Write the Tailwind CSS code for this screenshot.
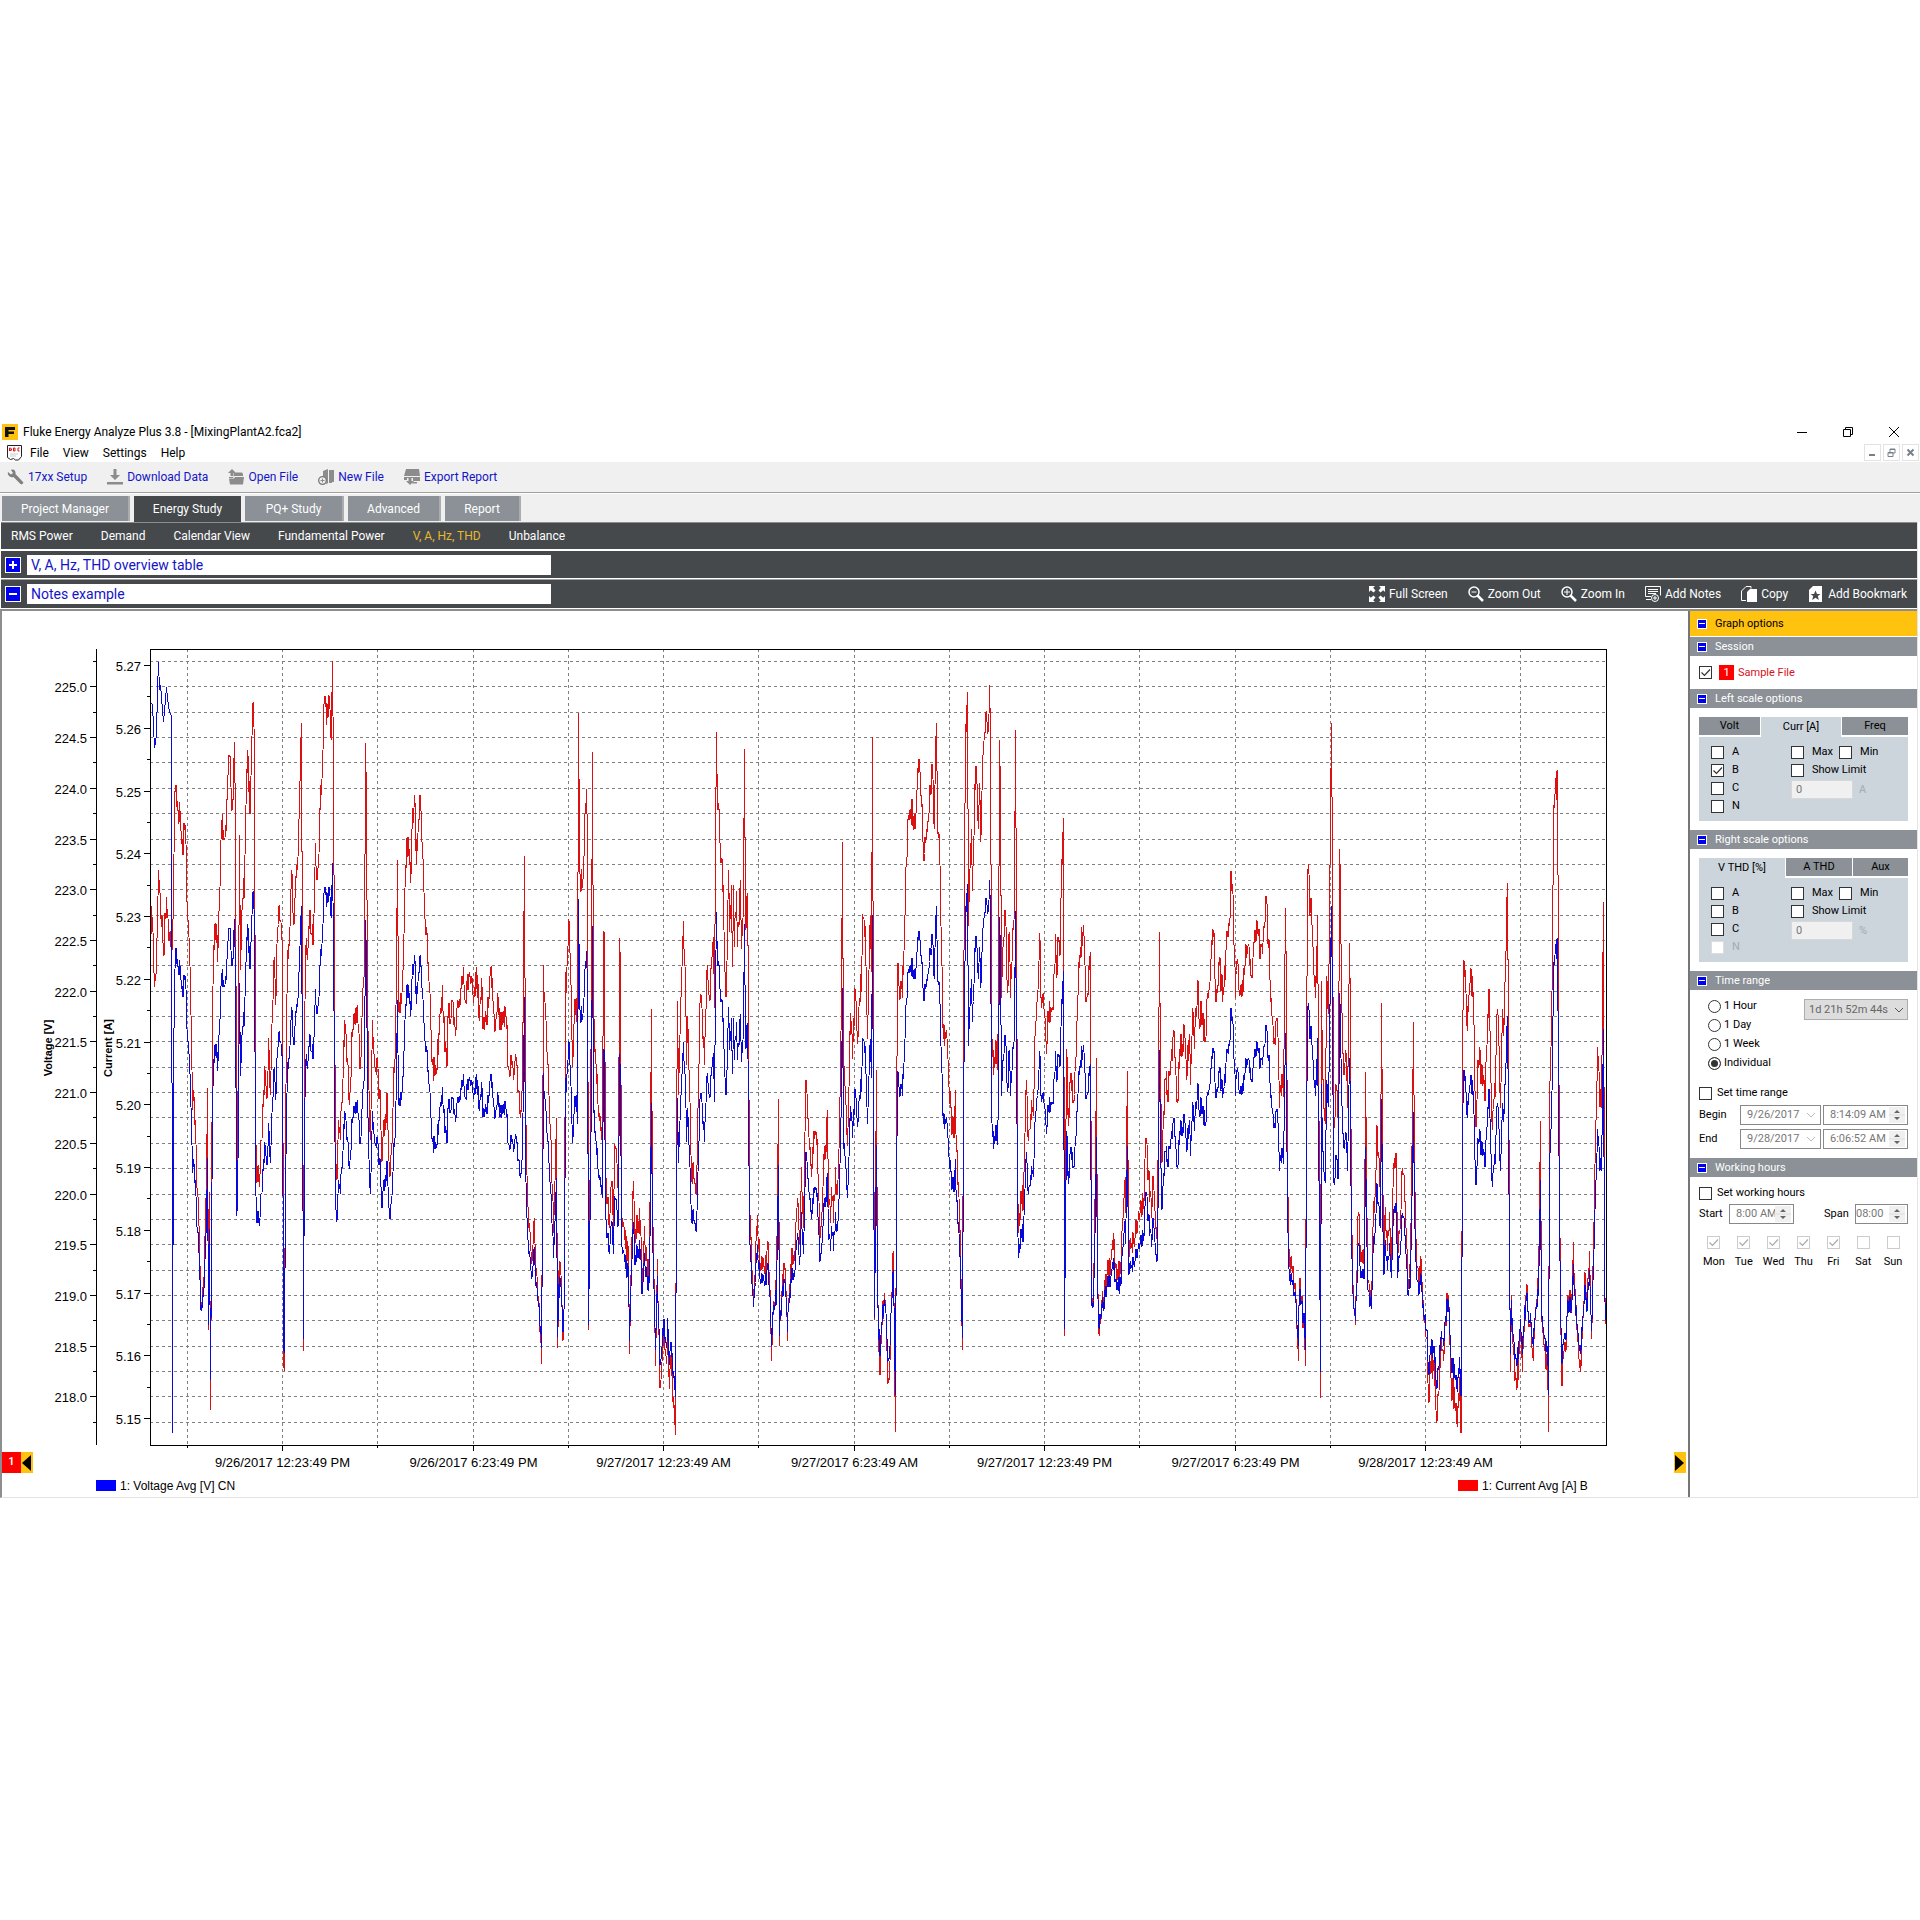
<!DOCTYPE html>
<html lang="en">
<head>
  <meta charset="UTF-8">
  <meta name="viewport" content="width=device-width, initial-scale=1.0">
  <title>Fluke Energy Analyze Plus 3.8 - [MixingPlantA2.fca2]</title>
  <script src="https://cdn.jsdelivr.net/npm/@tailwindcss/browser@4"></script>
</head>
<body class="bg-white min-h-screen pt-[421px] text-xs text-black font-[Roboto,sans-serif]">

  <!-- Title bar -->
  <header class="flex items-center h-[22px] pl-0.5 pr-5">
    <svg class="w-4 h-4 mr-[5px]" viewBox="0 0 16 16"><rect width="16" height="16" fill="#ffc20e"/><path d="M3 3h10v3H6.500v1.500H12v2.500H6.500V13H3z" fill="#111"/></svg>
    <h1>Fluke Energy Analyze Plus 3.8 - [MixingPlantA2.fca2]</h1>
    <div class="ml-auto flex items-center gap-[34px]">
      <button aria-label="Minimize"><svg class="w-3 h-3" viewBox="0 0 12 12" stroke="#000"><path d="M1 6.500h10"/></svg></button>
      <button aria-label="Restore"><svg class="w-3 h-3" viewBox="0 0 12 12" fill="none" stroke="#000"><path d="M1.500 3.500h7v7h-7zM3.500 3.500v-2h7v7h-2"/></svg></button>
      <button aria-label="Close"><svg class="w-3 h-3" viewBox="0 0 12 12" stroke="#000"><path d="M1 1l10 10M11 1L1 11"/></svg></button>
    </div>
  </header>

  <!-- Menu bar -->
  <div class="flex items-center h-[19px] pl-[7px] pr-px">
    <svg class="w-4 h-4 mr-[7px]" viewBox="0 0 16 16" fill="none" stroke="#222"><path d="M.5.500h14v11l-3 3.500h-3l-2-1.500-3 1-3-2z" fill="#fff"/><path d="M2.500 3v3M2.500 3h1l1 1v1l-1 1zM6.500 3h1.500v3H6.500zM12.500 3H11v3h1.500" stroke="#d11"/><path d="M3 9h8M3 11h6" stroke="#ccc"/></svg>
    <nav class="flex gap-[14px]">
      <button>File</button><button>View</button><button>Settings</button><button>Help</button>
    </nav>
    <div class="ml-auto flex gap-0.5">
      <button aria-label="Minimize document" class="w-[17px] h-[17px] border border-[#e3e3e3] grid place-items-center"><svg class="w-[9px] h-[9px]" viewBox="0 0 9 9"><path d="M1 6h6v2H1z" fill="#77818c"/></svg></button>
      <button aria-label="Restore document" class="w-[17px] h-[17px] border border-[#e3e3e3] grid place-items-center"><svg class="w-[9px] h-[9px]" viewBox="0 0 9 9" fill="none" stroke="#77818c"><path d="M1 4.500h5v4H1zM3 4V1h5v4H6M1 5h5M3 1.500h5"/></svg></button>
      <button aria-label="Close document" class="w-[17px] h-[17px] border border-[#e3e3e3] grid place-items-center"><svg class="w-[9px] h-[9px]" viewBox="0 0 9 9" stroke="#77818c" stroke-width="2"><path d="M1.500 1.500l6 6M7.500 1.500l-6 6"/></svg></button>
    </div>
  </div>

  <!-- Toolbar -->
  <div class="flex items-center gap-5 h-[31px] pl-[7px] bg-[#f0f0f0] border-b border-[#a0a0a0] text-[#1414c8]">
    <button class="flex items-center gap-1"><svg class="w-[17px] h-4" viewBox="0 0 17 16" fill="#808080"><path d="M1 3l3 2.500L6 4 4 1C7-.5 9 2 8.500 5L16 13c1 1-1 3-2.500 2L6.500 8C3 9 0 6 1 3z"/></svg>17xx Setup</button>
    <button class="flex items-center gap-1"><svg class="w-4 h-4" viewBox="0 0 16 16" fill="#8c8c8c"><path d="M6.500 0h3v6H13l-5 5-5-5h3.500zM0 13h16v2.500H0z"/></svg>Download Data</button>
    <button class="flex items-center gap-1"><svg class="w-4 h-4" viewBox="0 0 16 16" fill="#8c8c8c"><path d="M4 0l4 4H5.500v3h-3V4H0zM1 8h5V3.500h8L15 5v2H6L5 9H1zM1 9.500L2 15.500h13L16 8H7L6 9.500z"/></svg>Open File</button>
    <button class="flex items-center gap-1"><svg class="w-4 h-4" viewBox="0 0 16 16" fill="#8c8c8c"><path d="M5 2l5-2v14l-2 1.500C9 12 8 8 5 7.500zM11 1l5 0v12h-2v1h-3z"/><circle cx="4.500" cy="11.500" r="3.800" fill="#f0f0f0" stroke="#777" stroke-width="1.300"/><path d="M4 9.500h1V11h1.500v1H5v1.500H4V12H2.500v-1H4z"/></svg>New File</button>
    <button class="flex items-center gap-1"><svg class="w-4 h-4" viewBox="0 0 16 16" fill="#8c8c8c"><path d="M2 0h13l1 7H0zM0 8h16v4H9V9H3v2H0zM4.500 8h3v4H10l-4 4-4-4h2.500zM9 13h4v1.500H8z"/></svg>Export Report</button>
  </div>

  <!-- Study tabs -->
  <nav class="flex items-end gap-1 h-[29px] pl-0.5 bg-[#f0f0f0] border-t border-white text-white">
    <button class="w-32 h-[25px] mb-px bg-[#8b9196] border-r-2 border-[#a9adb0]">Project Manager</button>
    <button class="w-[107px] h-[26px] bg-[#45494c]">Energy Study</button>
    <button class="w-[99px] h-[25px] mb-px bg-[#8b9196] border-r-2 border-[#a9adb0]">PQ+ Study</button>
    <button class="w-[93px] h-[25px] mb-px bg-[#8b9196] border-r-2 border-[#a9adb0]">Advanced</button>
    <button class="w-[76px] h-[25px] mb-px bg-[#8b9196] border-r-2 border-[#a9adb0]">Report</button>
  </nav>

  <main class="mr-[2px] border-r border-[#e3e3e3]">
    <nav class="flex items-center gap-7 h-[27px] pl-[10px] ml-px bg-[#45494c] border-t border-[#8d8d8d] text-white">
      <a href="#rms">RMS Power</a>
      <a href="#demand">Demand</a>
      <a href="#calendar">Calendar View</a>
      <a href="#fundamental">Fundamental Power</a>
      <a href="#vahz" class="text-[#e8b82e]">V, A, Hz, THD</a>
      <a href="#unbalance">Unbalance</a>
    </nav>

    <div class="flex items-center gap-1.5 h-[27px] mt-0.5 pl-1 ml-px bg-[#45494c]">
      <button aria-label="Expand table" class="w-4 h-4 bg-[#0000f0] border border-white grid place-items-center"><svg class="w-2.5 h-2.5" viewBox="0 0 10 10" stroke="#fff" stroke-width="2"><path d="M1 5h8M5 1v8"/></svg></button>
      <input aria-label="Table title" value="V, A, Hz, THD overview table" class="w-[524px] h-5 px-1 bg-white text-sm text-[#1414c8]">
    </div>

    <div class="flex items-center gap-1.5 h-[29px] mt-px pl-1 pr-[10px] ml-px bg-[#45494c] border-t border-[#a0a0a0] text-white">
      <button aria-label="Collapse chart" class="w-4 h-4 bg-[#0000f0] border border-white grid place-items-center"><svg class="w-2.5 h-2.5" viewBox="0 0 10 10" stroke="#fff" stroke-width="2"><path d="M1 5h8"/></svg></button>
      <input aria-label="Chart title" value="Notes example" class="w-[524px] h-5 px-1 bg-white text-sm text-[#1414c8]">
      <div class="ml-auto flex items-center gap-5">
        <button class="flex items-center gap-1"><svg class="w-4 h-4" viewBox="0 0 16 16" fill="#fff"><path d="M0 0h6L4.200 1.800 6.500 4.500 4.500 6.500 1.800 4.200 0 6zM16 0v6l-1.800-1.800L11.500 6.500 9.500 4.500l2.300-2.700L10 0zM0 16v-6l1.800 1.800 2.700-2.300 2 2-2.300 2.700L6 16zM16 16h-6l1.800-1.800-2.300-2.700 2-2 2.700 2.300L16 10z"/></svg>Full Screen</button>
        <button class="flex items-center gap-1"><svg class="w-4 h-4" viewBox="0 0 16 16" fill="none" stroke="#fff"><circle cx="6" cy="6" r="5" stroke-width="1.500"/><path d="M3.500 6h5"/><path d="M9.500 9.500l5.500 5.500" stroke-width="2.500"/></svg>Zoom Out</button>
        <button class="flex items-center gap-1"><svg class="w-4 h-4" viewBox="0 0 16 16" fill="none" stroke="#fff"><circle cx="6" cy="6" r="5" stroke-width="1.500"/><path d="M3 6h6M6 3v6"/><path d="M9.500 9.500l5.500 5.500" stroke-width="2.500"/></svg>Zoom In</button>
        <button class="flex items-center gap-1"><svg class="w-4 h-4" viewBox="0 0 16 16" fill="none" stroke="#fff"><path d="M6 10.500H.5V.500h15v9M3 3.500h10M3 5.500h10M3 7.500h8M1 13.500h5"/><circle cx="10" cy="12" r="3.500" fill="#45494c"/><path d="M8 12h4M10 10v4"/></svg>Add Notes</button>
        <button class="flex items-center gap-1"><svg class="w-4 h-4" viewBox="0 0 16 16"><path d="M5 14.500H.5V5L5 .500h5v2" fill="none" stroke="#fff"/><path d="M9 3h7v13H6V6z" fill="#fff"/></svg>Copy</button>
        <button class="flex items-center gap-1"><svg class="w-4 h-4" viewBox="0 0 16 16"><path d="M5 0h9v16H1V4z" fill="#fff"/><path d="M7.500 4.500L9 8h3.500L9.800 10l1 4-3.300-2.300L4.200 14l1-4L2.500 8H6z" fill="#45494c"/></svg>Add Bookmark</button>
      </div>
    </div>

    <div class="flex mt-px border-t-2 border-l-2 border-[#8d8d8d] border-b border-b-[#e3e3e3]">
      <!-- Chart -->
      <section class="relative flex-1 min-w-0">
        <svg id="chart" class="block w-full h-auto font-['Liberation_Sans',sans-serif] text-[13px]" viewBox="2 611 1686 886" role="img" aria-label="Voltage and current over time">
          <g id="grid" stroke="#808080" stroke-dasharray="3 3" shape-rendering="crispEdges"></g>
          <path id="current" fill="none" stroke="#dc1010" stroke-linejoin="bevel" shape-rendering="crispEdges"/>
          <path id="voltage" fill="none" stroke="#0808d8" stroke-linejoin="bevel" shape-rendering="crispEdges"/>
          <rect x="150.500" y="649.500" width="1456" height="796" fill="none" stroke="#000"/>
          <path id="ticks" stroke="#000" fill="none" shape-rendering="crispEdges"/>
          <g id="labels"></g>
          <g class="text-[11px] font-bold" text-anchor="middle">
            <text transform="translate(52 1048) rotate(-90)">Voltage [V]</text>
            <text transform="translate(112 1048) rotate(-90)">Current [A]</text>
          </g>
          <rect x="96" y="1480" width="20" height="11" fill="#00f"/>
          <text x="120" y="1490" class="text-xs">1: Voltage Avg [V] CN</text>
          <rect x="1458" y="1480" width="20" height="11" fill="#f00"/>
          <text x="1482" y="1490" class="text-xs">1: Current Avg [A] B</text>
        </svg>
        <button aria-label="Previous section" class="absolute left-0 bottom-6 flex items-center h-[21px] bg-[#ffc20e]">
          <span class="w-[19px] h-full grid place-items-center bg-[#f00] text-white text-[11px] font-semibold">1</span>
          <svg class="w-3 h-5" viewBox="0 0 12 20"><path d="M10 2v16L1 10z"/></svg>
        </button>
        <button aria-label="Next section" class="absolute right-0.5 bottom-6 h-[21px] bg-[#ffc20e]">
          <svg class="w-3 h-5" viewBox="0 0 12 20"><path d="M1 2v16l9-8z"/></svg>
        </button>
      </section>

      <!-- Options -->
      <aside class="w-[229px] shrink-0 border-l-2 border-[#767676] text-[11px] leading-4">
        <h2 class="flex items-center gap-2 h-[25px] pl-[7px] bg-[#ffc20e]"><button aria-label="Collapse graph options" class="w-[10px] h-[10px] bg-[#0000f0] border border-white grid place-items-center"><span class="w-1.5 h-px bg-white"></span></button>Graph options</h2>
        <h3 class="flex items-center gap-2 h-[19px] mt-px pl-[7px] bg-[#8b9196] text-white"><button aria-label="Collapse session" class="w-[10px] h-[10px] bg-[#0000f0] border border-white grid place-items-center"><span class="w-1.5 h-px bg-white"></span></button>Session</h3>
        <label class="flex items-center h-[33px] pl-[9px] text-[#d8101c]">
          <span class="grid mr-[7px]"><input type="checkbox" checked class="peer appearance-none w-[13px] h-[13px] bg-white border border-[#333] [grid-area:1/1]"><svg class="w-[13px] h-[13px] [grid-area:1/1] invisible peer-checked:visible" viewBox="0 0 13 13" fill="none" stroke="#333"><path d="M2.500 6.500l3 3 5.500-6" stroke-width="1.200"/></svg></span>
          <span class="w-[15px] h-[15px] mr-1 grid place-items-center bg-[#f00] text-white">1</span>Sample File
        </label>

        <h3 class="flex items-center gap-2 h-[19px] pl-[7px] bg-[#8b9196] text-white"><button aria-label="Collapse left scale" class="w-[10px] h-[10px] bg-[#0000f0] border border-white grid place-items-center"><span class="w-1.5 h-px bg-white"></span></button>Left scale options</h3>
        <div class="mx-[9px] mt-[9px] mb-[9px]">
          <div class="flex h-5 bg-[#ccd4dc]">
            <button class="w-[62px] bg-[#8b9196] border-r border-b-2 border-white">Volt</button>
            <button class="flex-1">Curr [A]</button>
            <button class="w-[67px] bg-[#8b9196] border-l border-b-2 border-white">Freq</button>
          </div>
          <div class="flex h-[84px] pt-[7px] pl-3 bg-[#ccd4dc]">
            <div class="w-20 flex flex-col gap-0.5">
              <label class="flex items-center gap-2"><input type="checkbox" class="appearance-none w-[13px] h-[13px] bg-white border border-[#333]">A</label>
              <label class="flex items-center gap-2"><span class="grid"><input type="checkbox" checked class="peer appearance-none w-[13px] h-[13px] bg-white border border-[#333] [grid-area:1/1]"><svg class="w-[13px] h-[13px] [grid-area:1/1] invisible peer-checked:visible" viewBox="0 0 13 13" fill="none" stroke="#333"><path d="M2.500 6.500l3 3 5.500-6" stroke-width="1.200"/></svg></span>B</label>
              <label class="flex items-center gap-2"><input type="checkbox" class="appearance-none w-[13px] h-[13px] bg-white border border-[#333]">C</label>
              <label class="flex items-center gap-2"><input type="checkbox" class="appearance-none w-[13px] h-[13px] bg-white border border-[#333]">N</label>
            </div>
            <div class="flex flex-col gap-0.5">
              <div class="flex gap-1.5">
                <label class="flex items-center gap-2"><input type="checkbox" class="appearance-none w-[13px] h-[13px] bg-white border border-[#333]">Max</label>
                <label class="flex items-center gap-2"><input type="checkbox" class="appearance-none w-[13px] h-[13px] bg-white border border-[#333]">Min</label>
              </div>
              <label class="flex items-center gap-2"><input type="checkbox" class="appearance-none w-[13px] h-[13px] bg-white border border-[#333]">Show Limit</label>
              <label class="flex items-center gap-1.5 text-[#a5abb1]"><input disabled value="0" class="w-[62px] h-[19px] px-1 bg-[#f0f0f0] border border-[#d8d8d8] text-[#777]">A</label>
            </div>
          </div>
        </div>

        <h3 class="flex items-center gap-2 h-[19px] pl-[7px] bg-[#8b9196] text-white"><button aria-label="Collapse right scale" class="w-[10px] h-[10px] bg-[#0000f0] border border-white grid place-items-center"><span class="w-1.5 h-px bg-white"></span></button>Right scale options</h3>
        <div class="mx-[9px] mt-[9px] mb-[9px]">
          <div class="flex h-5 bg-[#ccd4dc]">
            <button class="flex-1">V THD [%]</button>
            <button class="w-[67px] bg-[#8b9196] border-l border-b-2 border-white">A THD</button>
            <button class="w-14 bg-[#8b9196] border-l border-b-2 border-white">Aux</button>
          </div>
          <div class="flex h-[84px] pt-[7px] pl-3 bg-[#ccd4dc]">
            <div class="w-20 flex flex-col gap-0.5">
              <label class="flex items-center gap-2"><input type="checkbox" class="appearance-none w-[13px] h-[13px] bg-white border border-[#333]">A</label>
              <label class="flex items-center gap-2"><input type="checkbox" class="appearance-none w-[13px] h-[13px] bg-white border border-[#333]">B</label>
              <label class="flex items-center gap-2"><input type="checkbox" class="appearance-none w-[13px] h-[13px] bg-white border border-[#333]">C</label>
              <label class="flex items-center gap-2 text-[#a5abb1]"><input type="checkbox" disabled class="appearance-none w-[13px] h-[13px] bg-white border border-[#ddd]">N</label>
            </div>
            <div class="flex flex-col gap-0.5">
              <div class="flex gap-1.5">
                <label class="flex items-center gap-2"><input type="checkbox" class="appearance-none w-[13px] h-[13px] bg-white border border-[#333]">Max</label>
                <label class="flex items-center gap-2"><input type="checkbox" class="appearance-none w-[13px] h-[13px] bg-white border border-[#333]">Min</label>
              </div>
              <label class="flex items-center gap-2"><input type="checkbox" class="appearance-none w-[13px] h-[13px] bg-white border border-[#333]">Show Limit</label>
              <label class="flex items-center gap-1.5 text-[#a5abb1]"><input disabled value="0" class="w-[62px] h-[19px] px-1 bg-[#f0f0f0] border border-[#d8d8d8] text-[#777]">%</label>
            </div>
          </div>
        </div>

        <h3 class="flex items-center gap-2 h-[19px] pl-[7px] bg-[#8b9196] text-white"><button aria-label="Collapse time range" class="w-[10px] h-[10px] bg-[#0000f0] border border-white grid place-items-center"><span class="w-1.5 h-px bg-white"></span></button>Time range</h3>
        <div class="px-[9px] pt-2 pb-[9px]">
          <div class="flex justify-between items-start pl-[9px] mb-[14px]">
            <div class="flex flex-col gap-[3px]">
              <label class="flex items-center gap-[3px]"><input type="radio" name="range" class="appearance-none w-[13px] h-[13px] rounded-full bg-white border border-[#333] checked:bg-[#333] checked:shadow-[inset_0_0_0_2px_#fff]">1 Hour</label>
              <label class="flex items-center gap-[3px]"><input type="radio" name="range" class="appearance-none w-[13px] h-[13px] rounded-full bg-white border border-[#333] checked:bg-[#333] checked:shadow-[inset_0_0_0_2px_#fff]">1 Day</label>
              <label class="flex items-center gap-[3px]"><input type="radio" name="range" class="appearance-none w-[13px] h-[13px] rounded-full bg-white border border-[#333] checked:bg-[#333] checked:shadow-[inset_0_0_0_2px_#fff]">1 Week</label>
              <label class="flex items-center gap-[3px]"><input type="radio" name="range" checked class="appearance-none w-[13px] h-[13px] rounded-full bg-white border border-[#333] checked:bg-[#333] checked:shadow-[inset_0_0_0_2px_#fff]">Individual</label>
            </div>
            <div class="grid items-center mt-px">
              <select disabled aria-label="Duration" class="[grid-area:1/1] appearance-none w-[104px] h-[21px] pl-1 bg-[#ddd] border border-[#adadad] text-[#666] opacity-100"><option>1d 21h 52m 44s</option></select>
              <svg class="[grid-area:1/1] justify-self-end mr-1 w-2.5 h-2 pointer-events-none" viewBox="0 0 10 8" fill="none" stroke="#555"><path d="M1 2l4 4 4-4"/></svg>
            </div>
          </div>
          <label class="flex items-center gap-[5px] mb-1"><input type="checkbox" class="appearance-none w-[13px] h-[13px] bg-white border border-[#333]">Set time range</label>
          <div class="flex items-center mb-1">
            <label for="beginDate" class="w-[41px] shrink-0">Begin</label>
            <span class="flex items-center w-[81px] shrink-0 h-5 mr-0.5 border border-[#888]"><input id="beginDate" disabled value="9/26/2017" class="min-w-0 flex-1 pl-1.5 text-[#777]"><svg class="w-2.5 h-2 mr-1" viewBox="0 0 10 8" fill="none" stroke="#bbb"><path d="M1 2l4 4 4-4"/></svg></span>
            <span class="flex items-center flex-1 min-w-0 h-5 border border-[#888]"><input aria-label="Begin time" disabled value="8:14:09 AM" class="min-w-0 flex-1 pl-1.5 text-[#777]"><svg class="w-4 h-4 mr-0.5 bg-[#f0f0f0]" viewBox="0 0 16 16" fill="#666"><path d="M8 3l3 3H5zM8 13l3-3H5z"/><path d="M0 8h16" stroke="#ddd"/></svg></span>
          </div>
          <div class="flex items-center">
            <label for="endDate" class="w-[41px] shrink-0">End</label>
            <span class="flex items-center w-[81px] shrink-0 h-5 mr-0.5 border border-[#888]"><input id="endDate" disabled value="9/28/2017" class="min-w-0 flex-1 pl-1.5 text-[#777]"><svg class="w-2.5 h-2 mr-1" viewBox="0 0 10 8" fill="none" stroke="#bbb"><path d="M1 2l4 4 4-4"/></svg></span>
            <span class="flex items-center flex-1 min-w-0 h-5 border border-[#888]"><input aria-label="End time" disabled value="6:06:52 AM" class="min-w-0 flex-1 pl-1.5 text-[#777]"><svg class="w-4 h-4 mr-0.5 bg-[#f0f0f0]" viewBox="0 0 16 16" fill="#666"><path d="M8 3l3 3H5zM8 13l3-3H5z"/><path d="M0 8h16" stroke="#ddd"/></svg></span>
          </div>
        </div>

        <h3 class="flex items-center gap-2 h-[19px] pl-[7px] bg-[#8b9196] text-white"><button aria-label="Collapse working hours" class="w-[10px] h-[10px] bg-[#0000f0] border border-white grid place-items-center"><span class="w-1.5 h-px bg-white"></span></button>Working hours</h3>
        <div class="px-[9px] pt-2">
          <label class="flex items-center gap-[5px] mb-[3px]"><input type="checkbox" class="appearance-none w-[13px] h-[13px] bg-white border border-[#333]">Set working hours</label>
          <div class="flex items-center mb-3">
            <label for="start" class="w-[30px]">Start</label>
            <span class="flex items-center w-[65px] h-5 border border-[#888]"><input id="start" disabled value="8:00 AM" class="min-w-0 flex-1 pl-1.5 text-[#777]"><svg class="w-4 h-4 mr-0.5 bg-[#f0f0f0]" viewBox="0 0 16 16" fill="#666"><path d="M8 3l3 3H5zM8 13l3-3H5z"/><path d="M0 8h16" stroke="#ddd"/></svg></span>
            <label for="span" class="ml-auto w-[31px]">Span</label>
            <span class="flex items-center w-[53px] h-5 border border-[#888]"><input id="span" disabled value="08:00" class="min-w-0 flex-1 text-[#777]"><svg class="w-4 h-4 mr-0.5 bg-[#f0f0f0]" viewBox="0 0 16 16" fill="#666"><path d="M8 3l3 3H5zM8 13l3-3H5z"/><path d="M0 8h16" stroke="#ddd"/></svg></span>
          </div>
          <div id="days" class="grid grid-cols-7"></div>
        </div>
      </aside>
    </div>
  </main>

  <script>
    // Working days
    document.getElementById('days').innerHTML = ['Mon', 'Tue', 'Wed', 'Thu', 'Fri', 'Sat', 'Sun'].map((day, i) => `
      <label class="flex flex-col items-center gap-[5px]">
        <span class="grid"><input type="checkbox" disabled ${i < 5 ? 'checked' : ''} class="peer appearance-none w-[13px] h-[13px] bg-white border border-[#ccc] [grid-area:1/1]"><svg class="w-[13px] h-[13px] [grid-area:1/1] invisible peer-checked:visible" viewBox="0 0 13 13" fill="none" stroke="#aaa"><path d="M2.500 6.500l3 3 5.500-6" stroke-width="1.200"/></svg></span>
        ${day}
      </label>`).join('');

    // Plot area
    const left = 150, right = 1606, top0 = 649, bottom = 1445;
    const firstX = 187, stepX = 95.24, firstY = 661, stepY = 25.36;

    let grid = '', ticks = 'M96.5 649V1445', labels = '';
    for (let i = 0; i < 31; i++) {
      const y = Math.round(firstY + i * stepY) + 0.5;
      if (y < bottom) {
        grid += `<path d="M${left} ${y}H${right}"/>`;
        ticks += `M${i % 2 ? 90 : 93} ${y}H96`;
      }
      if (i % 2) labels += `<text x="87" y="${y + 5}" text-anchor="end">${(225 - (i - 1) / 4).toFixed(1)}</text>`;
    }
    for (let i = 0; i < 25; i++) {
      const y = Math.round(665 + i * 31.38) + 0.5;
      ticks += `M${i % 2 ? 147 : 144} ${y}H150`;
      if (i % 2 === 0) labels += `<text x="141" y="${y + 5}" text-anchor="end">${(5.27 - i / 200).toFixed(2)}</text>`;
    }
    const times = ['9/26/2017 12:23:49 PM', '9/26/2017 6:23:49 PM', '9/27/2017 12:23:49 AM', '9/27/2017 6:23:49 AM',
      '9/27/2017 12:23:49 PM', '9/27/2017 6:23:49 PM', '9/28/2017 12:23:49 AM'];
    for (let i = 0; i < 15; i++) {
      const x = Math.round(firstX + i * stepX) + 0.5;
      grid += `<path d="M${x} ${top0}V${bottom}"/>`;
      ticks += `M${x} ${bottom}v${i % 2 ? 6 : 3}`;
      if (i % 2) labels += `<text x="${x}" y="1467" text-anchor="middle">${times[(i - 1) / 2]}</text>`;
    }
    document.getElementById('grid').innerHTML = grid;
    document.getElementById('ticks').setAttribute('d', ticks);
    document.getElementById('labels').innerHTML = labels;

    // Current samples: x,y in plot units
    const samples = `150,918 152,925 154,987 156,960 158,870 160,905 163,952 166,897 169,935 171,937 172,950 173,910 174,800 176,788 178,810 180,820 182,855 184,830 185,828 187,910 189,950 191,1040
      192,1110 193,1090 195,1120 196,1170 198,1200 199,1250 201,1310 203,1290 204,1260 206,1182 207,1088 208,1330 209,1192 210,1410 211,1240 212,1010 213,945 215,927 217,962 219,905 221,820 223,830 225,825
      227,800 229,757 231,808 233,790 234,742 235,800 236,1173 237,1165 238,1020 239,835 240,970 242,905 244,880 246,780 247,750 250,810 251,740 253,702 254,770 255,1100 256,1183 258,1165 259,1187
      261,1140 263,1090 265,1070 267,1090 268,1038 270,1095 272,1000 274,957 275,1005 277,930 279,905 281,940 282,950 283,1336 284,1371 285,1130 287,950 289,930 291,870 293,925 295,890 297,870 299,800 301,723
      302,980 303,1351 304,1060 305,945 307,960 309,910 311,935 313,938 315,843 316,870 318,860 320,785 321,795 322,750 324,703 326,725 328,698 330,725 331,740 332,661 333,770 334,980 335,1150 336,1180
      338,1120 340,1140 342,1080 344,1020 346,1050 349,1105 351,1050 353,1030 355,1025 357,1005 360,1065 362,1000 364,970 365,743 366,800 367,1000 369,1120 370,1140 372,1020 374,1060 377,1060 380,1110 381,1160
      383,1120 385,1130 387,1097 389,1177 391,1150 393,1080 395,1055 397,860 398,1012 400,1010 403,957 405,865 407,837 410,883 412,824 414,795 416,865 418,819 420,795 421,814 423,870 425,926 427,952 429,988
      432,1065 434,1072 437,1059 440,1008 442,985 444,1039 446,1065 448,1018 451,1003 455,1036 458,1008 463,967 465,1003 469,972 473,1003 477,975 479,1021 481,978 483,1026 486,1024 490,971 492,978 494,1026
      497,993 500,1024 503,1011 506,1029 508,1067 512,1062 513,1080 515,1054 518,1090 520,1118 522,1080 524,856 525,1100 526,1157 528,1218 531,1264 534,1218 535,1274 538,1305 541,1364 542,1192 543,965 544,998
      547,1065 548,1080 551,1152 553,1233 554,1192 556,1118 557,1348 558,1279 560,1274 561,1300 563,1338 564,1269 565,972 566,993 568,920 570,957 572,1067 574,1018 576,998 577,1039 578,713 579,845 580,891
      583,865 585,809 586,789 587,834 588,1330 590,1131 591,972 592,752 593,1018 595,1049 597,1090 600,1131 602,1146 603,932 604,957 605,1167 607,1203 609,1228 611,1182 613,1228 614,1144 616,1152 618,1182
      619,938 620,967 621,1203 623,1223 625,1249 628,1254 629,1354 631,1249 633,1181 634,1238 637,1228 639,1208 642,1284 644,1226 647,1279 649,1269 651,1009 652,1213 654,1290 655,1366 657,1259 658,1331
      660,1387 661,1366 663,1325 666,1364 667,1320 669,1389 671,1356 673,1397 675,1435 676,1141 677,1001 678,1095 680,1013 683,921 685,993 686,1065 687,1016 689,1075 691,1182 693,1162 696,1195 698,1080
      700,998 702,1029 704,1065 705,1018 707,965 709,998 713,937 714,1008 715,845 716,732 717,793 719,819 721,860 723,885 724,962 726,993 728,870 729,932 731,885 732,967 733,885 734,947 736,891 737,947
      740,880 741,949 743,891 744,749 745,926 747,893 748,998 749,1203 751,1264 753,1305 755,1269 757,1215 759,1264 762,1269 764,1274 767,1244 769,1274 771,1361 773,1315 776,1284 778,1099 779,1346 782,1274
      785,1279 787,1341 789,1284 792,1254 795,1244 797,1198 799,1244 801,1167 803,1228 805,1100 806,1090 808,1121 811,1177 814,1131 817,1152 819,1236 821,1213 824,1146 826,1152 827,1110 828,1208 830,1223
      831,1187 833,1223 835,1167 837,1187 839,1131 841,998 842,842 843,1075 845,1090 847,1146 849,1059 850,1013 852,1059 853,1018 855,998 857,1044 859,998 861,978 862,914 865,942 867,1039 869,947 870,916
      871,972 872,737 873,1065 874,1320 876,1070 877,1305 880,1374 881,1331 883,1300 885,1300 887,1371 889,1366 891,1305 893,1251 894,1356 895,1432 896,1152 897,965 899,988 902,998 904,926 906,865 908,819
      910,809 913,816 915,829 917,768 920,776 922,804 923,855 926,829 928,814 930,788 932,768 934,829 935,758 936,723 937,819 939,834 941,957 943,1039 945,1039 947,1049 949,1095 952,1126 954,1136 955,1090
      956,1152 958,1182 960,1254 962,1350 963,1049 964,855 965,753 967,692 968,926 970,845 971,829 972,891 974,809 976,770 978,829 979,783 980,842 982,763 984,732 986,712 988,730 989,685 990,712 991,1018
      993,1075 995,1044 997,1070 998,998 999,740 1000,793 1001,998 1003,947 1005,916 1007,993 1009,932 1010,998 1012,937 1014,896 1015,730 1016,926 1017,1152 1018,1233 1021,1192 1023,1198 1024,1152 1026,1080
      1028,1141 1031,1100 1033,1116 1035,1029 1037,998 1039,933 1041,1008 1043,993 1046,1054 1048,1013 1051,1008 1053,1008 1055,934 1056,978 1058,942 1060,942 1061,860 1062,865 1063,818 1064,1336 1066,1049
      1068,1126 1070,1080 1072,1080 1073,1100 1076,1049 1078,972 1080,947 1083,925 1084,957 1086,998 1088,983 1090,952 1091,1290 1093,1295 1095,1167 1096,1058 1097,1290 1099,1336 1101,1300 1103,1310 1105,1290
      1107,1269 1110,1274 1113,1233 1115,1264 1117,1269 1120,1274 1122,1228 1124,1180 1125,1213 1127,1071 1128,1249 1130,1238 1133,1244 1135,1228 1137,1223 1140,1208 1143,1198 1146,1139 1148,1177 1151,1218
      1153,1182 1155,1228 1157,1238 1159,932 1160,1075 1161,1162 1163,1111 1165,1080 1167,1090 1170,1070 1173,1034 1175,1075 1177,1103 1179,1049 1182,1049 1184,1031 1186,1080 1189,1034 1190,1085 1192,1008
      1194,1049 1197,980 1199,1029 1201,1008 1205,1039 1207,993 1211,957 1213,937 1216,1000 1219,965 1223,995 1227,937 1229,926 1231,871 1233,915 1235,998 1237,959 1239,992 1243,992 1245,954 1247,954
      1250,959 1252,976 1254,943 1257,921 1259,948 1262,954 1263,926 1266,904 1269,959 1271,998 1274,1042 1277,1020 1279,1108 1282,1080 1283,1097 1285,908 1286,970 1287,1190 1289,1251 1292,1273 1295,1295
      1298,1361 1299,1278 1302,1317 1304,1322 1305,1366 1306,1080 1307,877 1308,864 1309,904 1311,904 1313,959 1315,998 1317,915 1319,1190 1320,1398 1321,981 1322,1080 1325,1124 1326,976 1328,1014 1330,816
      1331,723 1332,871 1333,1124 1336,1091 1338,1119 1339,849 1340,910 1342,1047 1344,1075 1346,1053 1347,1108 1349,943 1350,1025 1351,1234 1353,1289 1355,1325 1356,1278 1358,1212 1360,1251 1362,1262
      1364,1251 1365,1072 1366,1163 1367,1273 1371,1308 1373,1201 1375,1196 1376,1127 1378,1152 1380,1190 1381,1003 1382,1135 1383,1256 1385,1207 1387,1251 1389,1212 1391,1262 1393,1163 1396,1163 1397,1262
      1399,1234 1402,1168 1405,1201 1408,1289 1410,1262 1412,1108 1413,1022 1414,1168 1416,1262 1418,1284 1420,1256 1422,1306 1425,1317 1427,1350 1428,1402 1430,1361 1433,1366 1435,1377 1436,1421 1439,1372
      1441,1339 1443,1361 1445,1317 1448,1295 1449,1333 1451,1388 1453,1394 1457,1427 1459,1377 1461,1432 1462,1042 1463,967 1465,970 1467,1031 1469,987 1470,981 1473,992 1475,1124 1477,1080 1479,1047
      1481,1080 1483,1075 1485,1097 1487,1014 1489,989 1490,1064 1492,1130 1495,1075 1497,1009 1498,1020 1500,1108 1502,1009 1503,1036 1505,981 1506,932 1507,883 1508,1036 1509,1245 1510,1372 1511,1295
      1513,1350 1516,1388 1518,1361 1520,1322 1522,1372 1524,1328 1526,1295 1528,1311 1531,1328 1533,1361 1535,1311 1538,1289 1540,1121 1541,1322 1543,1344 1545,1361 1547,1361 1548,1432 1549,1108 1551,1025
      1552,970 1553,805 1555,778 1556,800 1557,770 1559,1190 1561,1383 1563,1355 1565,1350 1567,1306 1570,1295 1571,1311 1573,1242 1575,1306 1577,1333 1580,1372 1582,1339 1584,1278 1586,1306 1589,1251
      1591,1339 1593,1251 1595,1135 1597,1047 1599,1091 1601,1108 1603,902 1604,1273 1606,1350`.trim().split(/\s+/).map(p => p.split(',').map(Number));

    // Fill the gaps between samples with small fluctuations
    let seed = 7;
    const rand = () => (seed = (seed * 16807) % 2147483647) / 2147483647 - 0.5;
    const current = [];
    samples.forEach(([x, y], i) => {
      current.push([x, y]);
      const next = samples[i + 1];
      if (!next) return;
      const span = next[0] - x;
      for (let k = 0.5; k < span; k += 0.5) {
        const noise = Math.abs(next[1] - y) > 90 ? 0 : rand() * 30;
        current.push([x + k, y + (next[1] - y) * k / span + noise]);
      }
    });

    // The voltage follows the current, except during the first minutes
    const start = [[150, 702], [152, 705], [154, 748], [156, 735], [157, 690], [158, 662], [159, 690], [160, 685], [163, 722], [165, 700], [166, 687], [167, 698],
      [169, 712], [171, 716], [172, 1433], [173, 1075], [174, 985]];
    const voltage = start.concat(current.filter(p => p[0] > 174.5).map(([x, y]) => [x, 863 + (y - 661) * 0.69]));

    const toPath = points => 'M' + points.map(p => (p[0] + 0.5) + ' ' + p[1].toFixed(1)).join('L');
    document.getElementById('current').setAttribute('d', toPath(current));
    document.getElementById('voltage').setAttribute('d', toPath(voltage));
  </script>
</body>
</html>
